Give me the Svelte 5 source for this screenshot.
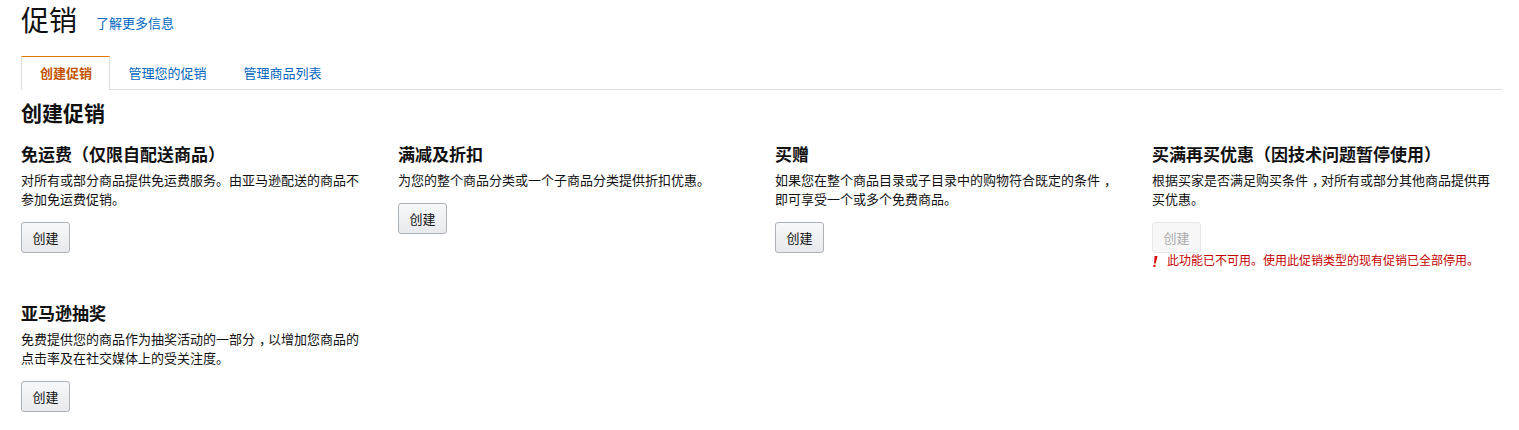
<script>
  const link = '了解更多信息';
  const tabs = ['创建促销', '管理您的促销', '管理商品列表'];
  const row1 = [
    { title: '免运费（仅限自配送商品）', desc: '对所有或部分商品提供免运费服务。由亚马逊配送的商品不参加免运费促销。' },
    { title: '满减及折扣', desc: '为您的整个商品分类或一个子商品分类提供折扣优惠。' },
    { title: '买赠', desc: '如果您在整个商品目录或子目录中的购物符合既定的条件，即可享受一个或多个免费商品。' },
    { title: '买满再买优惠（因技术问题暂停使用）', desc: '根据买家是否满足购买条件，对所有或部分其他商品提供再买优惠。', disabled: true, error: '此功能已不可用。使用此促销类型的现有促销已全部停用。' }
  ];
  const row2 = [
    { title: '亚马逊抽奖', desc: '免费提供您的商品作为抽奖活动的一部分，以增加您商品的点击率及在社交媒体上的受关注度。' }
  ];
  const parts = (s) => s.split(/([（），])/).filter(Boolean);
</script>

{#snippet text(s)}
  {#each parts(s) as p}{#if p === '，'}<span class="comma">{p}</span>{:else if p === '（' || p === '）'}<span class="paren">{p}</span>{:else}{p}{/if}{/each}
{/snippet}

{#snippet card(c)}
  <div class="card">
    <h3>{@render text(c.title)}</h3>
    <p>{@render text(c.desc)}</p>
    <button class:disabled={c.disabled} disabled={c.disabled}>创建</button>
    {#if c.error}
      <div class="error"><svg width="6" height="13" viewBox="0 0 6 13"><path d="M2.6 1h2.9L3.7 8.6H2.1z M1.6 9.8h2L3.2 12H1.2z" fill="#d00"/></svg><span>{c.error}</span></div>
    {/if}
  </div>
{/snippet}

<div class="page">
  <header>
    <h1>促销</h1>
    <a href="#top">{link}</a>
  </header>
  <nav>
    {#each tabs as t, i}
      <div class="tab" class:active={i === 0}>{t}</div>
    {/each}
  </nav>
  <h2>创建促销</h2>
  <div class="row first">
    {#each row1 as c}{@render card(c)}{/each}
  </div>
  <div class="row">
    {#each row2 as c}{@render card(c)}{/each}
  </div>
</div>

<style>
  :global(body) {
    margin: 0;
    background: #fff;
    font-family: "Liberation Sans", "Noto Sans CJK SC", sans-serif;
    color: #111;
  }
  .page {
    padding: 0 17px 0 21px;
    height: 430px;
    box-sizing: border-box;
    overflow: hidden;
  }
  header {
    display: flex;
    align-items: center;
    height: 56px;
    padding-bottom: 13px;
    box-sizing: border-box;
  }
  h1 {
    margin: 0;
    font-size: 28px;
    font-weight: 400;
    line-height: 37px;
  }
  header a {
    margin-left: 19px;
    margin-top: 2px;
    font-size: 13px;
    color: #0066c0;
    text-decoration: none;
  }
  nav {
    display: flex;
    height: 34px;
    border-bottom: 1px solid #ddd;
    box-sizing: border-box;
  }
  .tab {
    padding: 0 18.5px;
    font-size: 13px;
    line-height: 34px;
    color: #0066c0;
    border-top: 1px solid transparent;
  }
  .tab.active {
    padding: 0 17px 0 18px;
    color: #c45500;
    font-weight: 700;
    border-top: 1px solid #e77600;
    border-left: 1px solid #ddd;
    border-right: 1px solid #ddd;
    height: 34px;
    box-sizing: border-box;
    background: #fff;
  }
  h2 {
    margin: 0;
    font-size: 21px;
    font-weight: 700;
    line-height: 29px;
    padding-top: 9px;
  }
  .row {
    display: grid;
    grid-template-columns: repeat(4, 377px);
  }
  .row.first {
    margin-top: 16px;
    height: 159px;
  }
  .card {
    display: flex;
    flex-direction: column;
    align-items: flex-start;
  }
  h3 {
    margin: 0;
    font-size: 17px;
    font-weight: 700;
    line-height: 24px;
  }
  p {
    margin: 3px 0 0;
    width: 340px;
    font-size: 13px;
    line-height: 19px;
    color: #111;
  }
  .paren {
    font-family: "Noto Sans CJK TC", sans-serif;
    line-height: 0;
  }
  .comma {
    padding-left: 4px;
    letter-spacing: -4px;
  }
  button {
    margin-top: 13px;
    width: 49px;
    height: 31px;
    padding: 0;
    font-family: inherit;
    font-size: 13px;
    color: #111;
    border: 1px solid #adb1b8;
    border-radius: 3px;
    background: linear-gradient(#f7f8fa, #e7e9ec);
  }
  button.disabled {
    color: #aaa;
    border-color: #e7e7e7;
    background: #f7f7f7;
  }
  .error {
    display: flex;
    align-items: center;
    gap: 9px;
    font-size: 12px;
    line-height: 16px;
    color: #c40000;
  }
</style>
